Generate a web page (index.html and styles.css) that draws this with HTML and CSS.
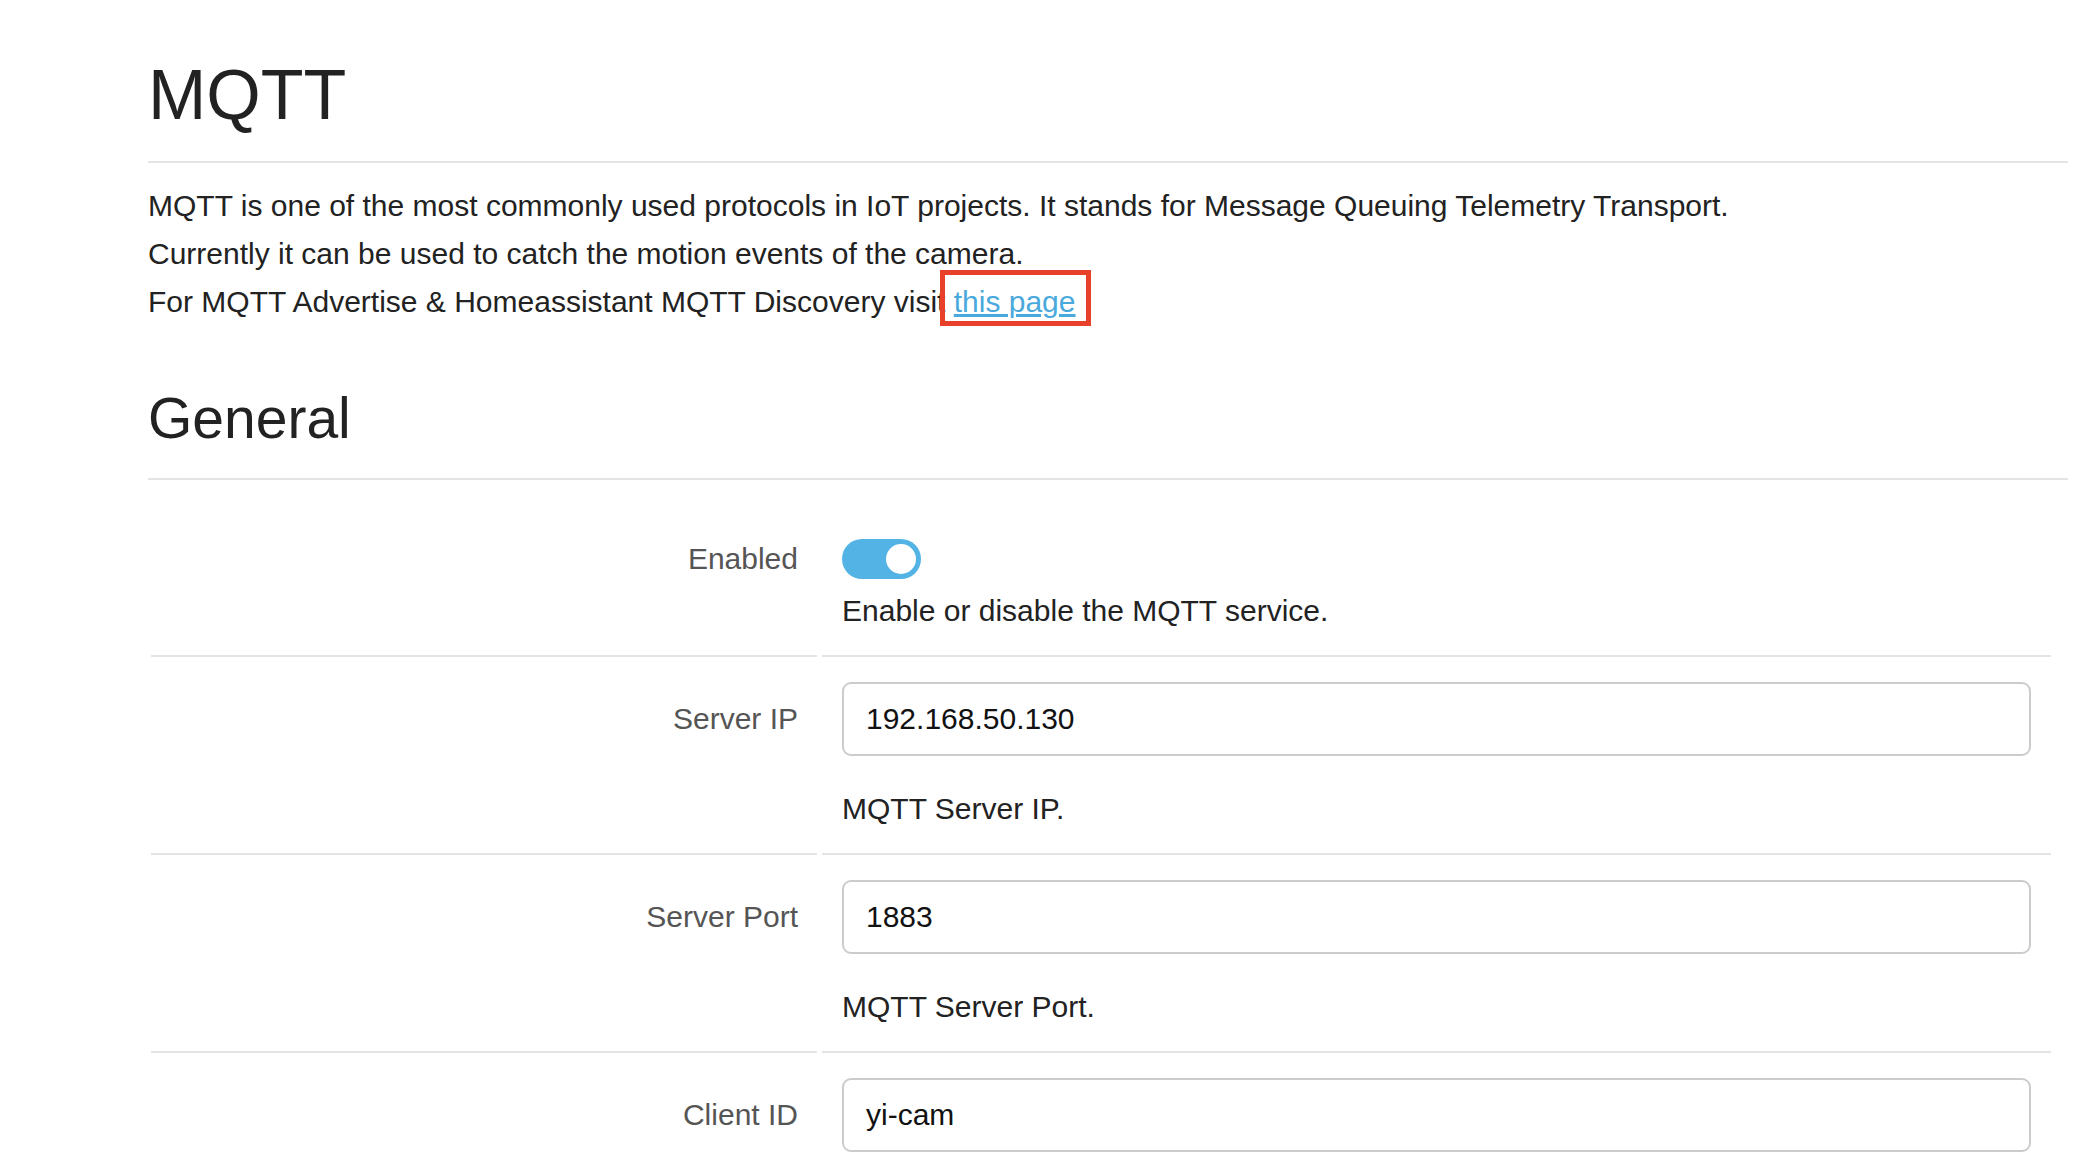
FILE: index.html
```html
<!DOCTYPE html>
<html lang="en">
<head>
<meta charset="utf-8">
<title>MQTT</title>
<link rel="stylesheet" href="styles.css">
</head>
<body>
<div class="container">
  <div class="page-header"><h1>MQTT</h1></div>
  <p class="intro">MQTT is one of the most commonly used protocols in IoT projects. It stands for Message Queuing Telemetry Transport.<br>
  Currently it can be used to catch the motion events of the camera.<br>
  For MQTT Advertise &amp; Homeassistant MQTT Discovery visit <a class="link highlighted" href="#">this page</a></p>

  <div class="section-header"><h2>General</h2></div>

  <div class="form">
    <div class="row">
      <div class="label-cell"><span class="label label-toggle">Enabled</span></div>
      <div class="field-cell">
        <span class="toggle"><span class="knob"></span></span>
        <div class="help help-tight">Enable or disable the MQTT service.</div>
      </div>
    </div>
    <div class="row">
      <div class="label-cell"><span class="label">Server IP</span></div>
      <div class="field-cell">
        <div class="input">192.168.50.130</div>
        <div class="help">MQTT Server IP.</div>
      </div>
    </div>
    <div class="row">
      <div class="label-cell"><span class="label">Server Port</span></div>
      <div class="field-cell">
        <div class="input">1883</div>
        <div class="help">MQTT Server Port.</div>
      </div>
    </div>
    <div class="row">
      <div class="label-cell"><span class="label">Client ID</span></div>
      <div class="field-cell">
        <div class="input">yi-cam</div>
      </div>
    </div>
  </div>
</div>
</body>
</html>
```

FILE: styles.css
```css
html, body {
  margin: 0;
  padding: 0;
  background: #ffffff;
}
body {
  font-family: "Liberation Sans", Arial, Helvetica, sans-serif;
  color: #222222;
  font-size: 30px;
  line-height: 48px;
}
.container {
  margin-left: 148px;
  width: 1920px;
  overflow: hidden;
}
.page-header {
  margin-top: 56px;
  padding-bottom: 27px;
  border-bottom: 2px solid #e4e4e4;
}
.page-header h1 {
  margin: 0;
  font-size: 70px;
  line-height: 78px;
  font-weight: 400;
  color: #222222;
}
.intro {
  margin: 19px 0 0 0;
  color: #222222;
}
.link {
  color: #4aa9dc;
  text-decoration: underline;
}
.highlighted {
  position: relative;
}
.highlighted::after {
  content: "";
  position: absolute;
  left: -14px;
  right: -15px;
  top: -15px;
  bottom: -8px;
  border: 5px solid #e8402b;
  pointer-events: none;
}
.section-header {
  margin-top: 60px;
  padding-bottom: 28px;
  border-bottom: 2px solid #e4e4e4;
}
.section-header h2 {
  margin: 0;
  font-size: 57px;
  line-height: 64px;
  font-weight: 400;
  color: #222222;
}
.form {
  margin-top: 34px;
  margin-left: 3px;
  width: 1900px;
}
.row {
  display: flex;
  gap: 5px;
}
.label-cell {
  width: 666px;
  flex: none;
  border-bottom: 2px solid #e4e4e4;
  padding-top: 25px;
  padding-right: 19px;
  box-sizing: border-box;
  display: flex;
  justify-content: flex-end;
  align-items: flex-start;
}
.label {
  color: #555555;
  height: 74px;
  display: flex;
  align-items: center;
}
.label-toggle {
  height: 40px;
}
.field-cell {
  flex: 1;
  border-bottom: 2px solid #e4e4e4;
  padding: 25px 20px 20px 20px;
}
.toggle {
  display: block;
  width: 79px;
  height: 40px;
  border-radius: 20px;
  background: #52b3e4;
  position: relative;
}
.knob {
  position: absolute;
  top: 5px;
  right: 5px;
  width: 30px;
  height: 30px;
  border-radius: 50%;
  background: #ffffff;
}
.input {
  height: 74px;
  box-sizing: border-box;
  border: 2px solid #cccccc;
  border-radius: 9px;
  padding: 0 22px;
  display: flex;
  align-items: center;
  color: #111111;
}
.help {
  margin-top: 29px;
  color: #222222;
}
.help-tight {
  margin-top: 8px;
}
```
